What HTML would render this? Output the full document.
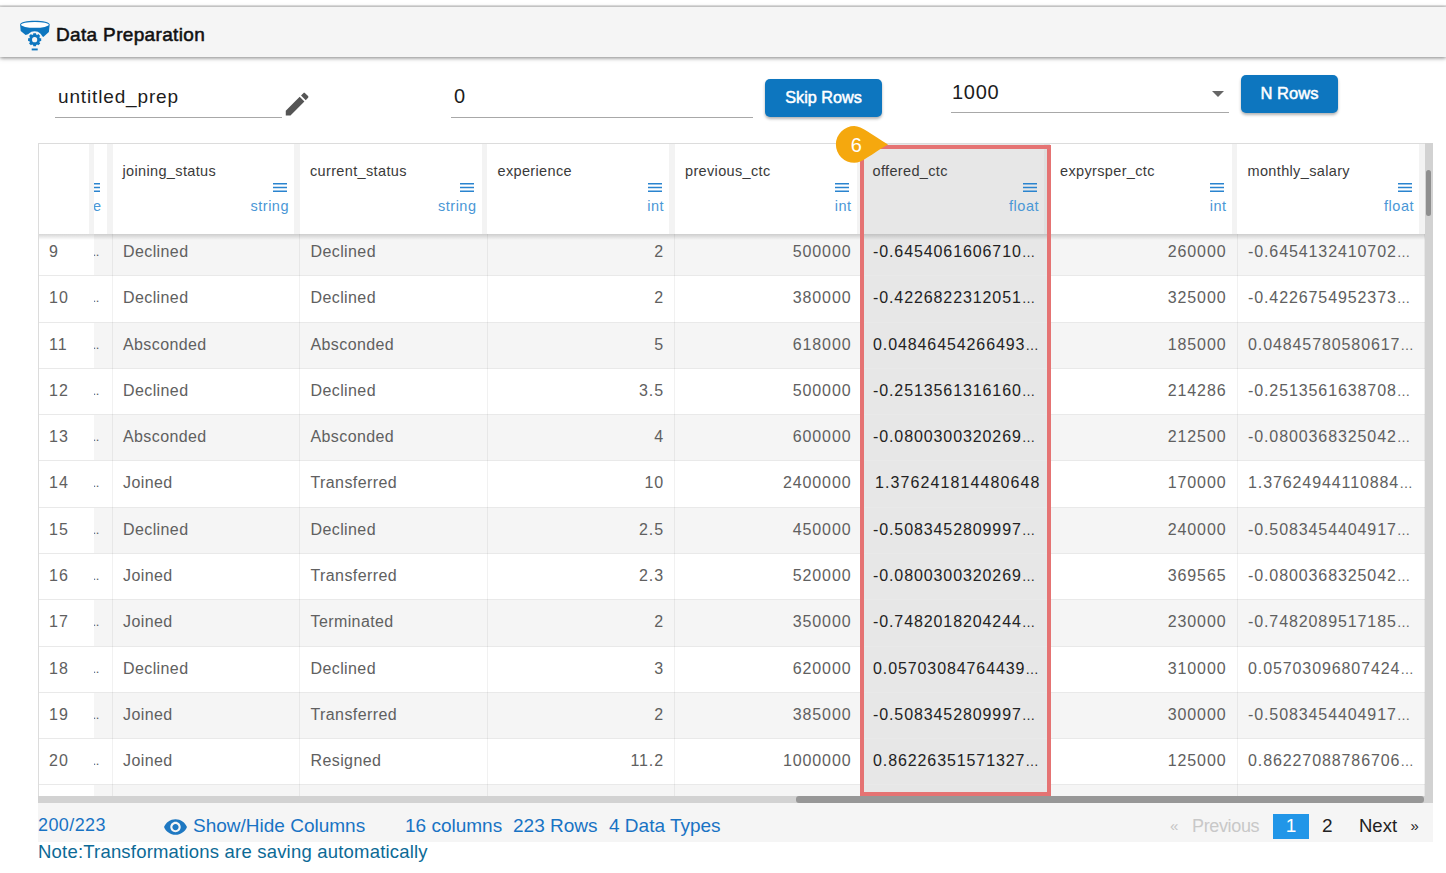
<!DOCTYPE html>
<html lang="en"><head><meta charset="utf-8"><title>Data Preparation</title>
<style>
*{box-sizing:border-box;margin:0;padding:0}
html,body{width:1446px;height:873px;overflow:hidden;background:#fff}
body{position:relative;font-family:"Liberation Sans",sans-serif;color:#333}
.abs{position:absolute;white-space:nowrap}
/* top bar */
.topline{position:absolute;left:0;top:5px;width:1446px;height:2px;background:linear-gradient(#e9e9e9,#d9d9d9)}
.titlebar{position:absolute;left:0;top:7px;width:1446px;height:50px;background:#f5f5f5;box-shadow:0 1px 4px rgba(0,0,0,.5)}
.title{position:absolute;left:56px;top:23px;font-size:19px;letter-spacing:.34px;font-weight:normal;-webkit-text-stroke:.55px #111;color:#111;line-height:24px;white-space:nowrap}
.logo{position:absolute;left:19px;top:20px;width:32px;height:32px}
/* toolbar */
.uline{position:absolute;height:1px;background:#a8a8a8}
.inp{position:absolute;white-space:nowrap;color:#1c1c1c;line-height:24px}
.btn{position:absolute;background:#0d76bf;color:#fff;border-radius:5px;text-align:center;font-weight:bold;white-space:nowrap;box-shadow:0 2px 3px rgba(0,0,0,.3)}
/* grid */
.grid{position:absolute;left:38px;top:143px;width:1395px;height:660px;overflow:hidden}
.gl{position:absolute;left:0;top:0;width:1px;height:653px;background:#dcdcdc;z-index:8}
.gt{position:absolute;left:0;top:0;width:1387px;height:1px;background:#dcdcdc;z-index:8}
.body{position:absolute;left:0;top:0;width:1387px;height:653px;overflow:hidden}
.row{position:absolute;left:0;width:1387px;height:46.27px;border-bottom:1px solid #e9e9e9;background:#fff}
.row.odd{background:#f5f5f5}
.c{position:absolute;top:0;height:46.27px;line-height:43.5px;font-size:16px;letter-spacing:.4px;color:#606060;white-space:nowrap;overflow:hidden}
.c.num{left:0;width:56px;height:45.3px;background:#fff;padding-left:11px;letter-spacing:1.1px;z-index:2}
.c.part{left:56px;width:18.5px;border-right:1px solid rgba(0,0,0,.055);padding-left:0;letter-spacing:-.3px;font-size:13px;text-indent:-1.5px}
.c.d{width:187.5px;border-right:1px solid rgba(0,0,0,.055);padding:0 10px 0 10.5px}
.c.r{text-align:right}
.c.hl{color:#222;height:45.270px;background:#e7e7e7;border-right-color:#dcdcdc}
.c.n{letter-spacing:.9px}
.h.hl{background:#e7e7e7}
.hstrip.hl{background:#dfdfdf}
.head{position:absolute;left:0;top:0;width:1387px;height:90.5px;background:#fff;z-index:3}
.h{position:absolute;top:0;width:182px;height:90.5px;background:#fff}
.hnum{position:absolute;left:0;top:0;width:51px;height:90.5px;background:#fff}
.hpart{position:absolute;left:56px;top:0;width:13px;height:90.5px;background:#fff;overflow:hidden}
.hstrip{position:absolute;top:0;width:5.8px;height:90.5px;background:#f3f3f3}
.nm{position:absolute;left:10px;top:18px;font-size:14.5px;line-height:20px;color:#3a3a3a;letter-spacing:.35px;white-space:nowrap}
.menu{position:absolute;right:8px;top:40px;width:14px;height:9px;stroke:#2a84cf;stroke-width:1.3;fill:none}
.ty{position:absolute;right:5.5px;top:52.5px;font-size:14.5px;line-height:20px;color:#4a97d6;letter-spacing:.5px;white-space:nowrap}
.hpart .menu{right:auto;left:-8px}
.hpart .ty{right:auto;left:-1px}
.hshadow{z-index:3;position:absolute;left:0;top:90.5px;width:1387px;height:6px;background:linear-gradient(rgba(0,0,0,.16),rgba(0,0,0,0))}
.hlbox{position:absolute;left:822px;top:2.300px;width:191px;height:650.700px;border:4px solid #e57373;z-index:5}
.vtrack{position:absolute;left:1387px;top:0;width:7.5px;height:653px;background:#d2d2d2;z-index:6}
.vthumb{position:absolute;left:1px;top:27px;width:5px;height:46px;background:#8f8f8f;border-radius:3px}
.htrack{position:absolute;left:0;top:653px;width:1395px;height:7px;background:#d2d2d2;z-index:6}
.hthumb{position:absolute;left:758px;top:0;width:628px;height:7px;background:#979797;border-radius:3px}
/* badge */
.badge{position:absolute;left:834px;top:124px;width:56px;height:41px;z-index:9}
/* footer */
.fbar{position:absolute;left:38px;top:803px;width:1395px;height:38.600px;background:#f5f5f5}
.ft{position:absolute;white-space:nowrap;font-size:18px;line-height:24px;color:#1873c4}
.pg{position:absolute;white-space:nowrap;font-size:19px;line-height:24px;color:#222}
.e{font-size:13.5px;letter-spacing:0}

</style></head><body>
<div class="topline"></div>
<div class="titlebar"></div>
<svg class="logo" viewBox="0 0 32 32">
  <path d="M1.100 4.500 C1.100 2 8 .7 15.900 .7 C23.800 .7 30.700 2 30.700 4.500 L29.900 12.100 L24.300 17 L16 12 L6.600 15 L1.700 10.900 Z" fill="#0d76bf"/>
  <ellipse cx="15.900" cy="4.850" rx="13.900" ry="2.900" fill="#fff"/>
  <circle cx="15.640" cy="19.700" r="8.400" fill="#f5f5f5"/>
  <path d="M14.13 14.51 L14.28 13.14 L17.00 13.14 L17.15 14.51 L18.24 14.97 L19.32 14.10 L21.24 16.02 L20.37 17.10 L20.83 18.19 L22.20 18.34 L22.20 21.06 L20.83 21.21 L20.37 22.30 L21.24 23.38 L19.32 25.30 L18.24 24.43 L17.15 24.89 L17.00 26.26 L14.28 26.26 L14.13 24.89 L13.04 24.43 L11.96 25.30 L10.04 23.38 L10.91 22.30 L10.45 21.21 L9.08 21.06 L9.08 18.34 L10.45 18.19 L10.91 17.10 L10.04 16.02 L11.96 14.10 L13.04 14.97Z M13.04 19.70 a2.6 2.6 0 1 0 5.2 0 a2.6 2.6 0 1 0 -5.2 0Z" fill="#0d76bf" fill-rule="evenodd"/>
  <rect x="12.700" y="28.500" width="6" height="1.900" fill="#0d76bf"/>
</svg>
<div class="title">Data Preparation</div>

<div class="inp" style="left:58px;top:84.500px;font-size:19px;letter-spacing:.85px">untitled_prep</div>
<div class="uline" style="left:55px;top:117px;width:227px"></div>
<svg class="abs" style="left:281.800px;top:88.700px;width:30.200px;height:30.200px" viewBox="0 0 24 24"><path fill="#555" d="M3 17.25V21h3.750L17.810 9.940l-3.750-3.750L3 17.250zM20.710 7.040c.39-.39.39-1.020 0-1.410l-2.340-2.340c-.39-.39-1.020-.39-1.410 0l-1.830 1.830 3.750 3.750 1.830-1.830z"/></svg>
<div class="inp" style="left:454px;top:84px;font-size:20px">0</div>
<div class="uline" style="left:451px;top:117px;width:302px"></div>
<div class="btn" style="left:765px;top:79px;width:117px;height:37.5px;line-height:37px;font-size:16.200px;font-weight:normal;-webkit-text-stroke:.5px #fff;letter-spacing:0">Skip Rows</div>
<div class="inp" style="left:952px;top:80px;font-size:20px;letter-spacing:.7px">1000</div>
<svg class="abs" style="left:1212px;top:91px;width:12px;height:6px" viewBox="0 0 12 6"><path d="M0 0h12L6 6z" fill="#666"/></svg>
<div class="uline" style="left:951px;top:112px;width:278px"></div>
<div class="btn" style="left:1241px;top:75px;width:97px;height:38px;line-height:37px;font-size:16.500px;font-weight:normal;-webkit-text-stroke:.5px #fff;letter-spacing:.05px">N Rows</div>

<div class="grid"><div class="gl"></div><div class="gt"></div>
<div class="body">
<div class="row odd" style="top:87.10px">
<div class="c num">9</div>
<div class="c part">..</div>
<div class="c d" style="left:74.5px">Declined</div>
<div class="c d" style="left:262.0px">Declined</div>
<div class="c d r n" style="left:449.5px">2</div>
<div class="c d r n" style="left:637.0px">500000</div>
<div class="c d n hl" style="left:824.5px">-0.6454061606710<span class="e">…</span></div>
<div class="c d r n" style="left:1012.0px">260000</div>
<div class="c d n" style="left:1199.5px">-0.6454132410702<span class="e">…</span></div>
</div>
<div class="row" style="top:133.37px">
<div class="c num">10</div>
<div class="c part">..</div>
<div class="c d" style="left:74.5px">Declined</div>
<div class="c d" style="left:262.0px">Declined</div>
<div class="c d r n" style="left:449.5px">2</div>
<div class="c d r n" style="left:637.0px">380000</div>
<div class="c d n hl" style="left:824.5px">-0.4226822312051<span class="e">…</span></div>
<div class="c d r n" style="left:1012.0px">325000</div>
<div class="c d n" style="left:1199.5px">-0.4226754952373<span class="e">…</span></div>
</div>
<div class="row odd" style="top:179.64px">
<div class="c num">11</div>
<div class="c part">..</div>
<div class="c d" style="left:74.5px">Absconded</div>
<div class="c d" style="left:262.0px">Absconded</div>
<div class="c d r n" style="left:449.5px">5</div>
<div class="c d r n" style="left:637.0px">618000</div>
<div class="c d n hl" style="left:824.5px">0.04846454266493<span class="e">…</span></div>
<div class="c d r n" style="left:1012.0px">185000</div>
<div class="c d n" style="left:1199.5px">0.04845780580617<span class="e">…</span></div>
</div>
<div class="row" style="top:225.91px">
<div class="c num">12</div>
<div class="c part">..</div>
<div class="c d" style="left:74.5px">Declined</div>
<div class="c d" style="left:262.0px">Declined</div>
<div class="c d r n" style="left:449.5px">3.5</div>
<div class="c d r n" style="left:637.0px">500000</div>
<div class="c d n hl" style="left:824.5px">-0.2513561316160<span class="e">…</span></div>
<div class="c d r n" style="left:1012.0px">214286</div>
<div class="c d n" style="left:1199.5px">-0.2513561638708<span class="e">…</span></div>
</div>
<div class="row odd" style="top:272.18px">
<div class="c num">13</div>
<div class="c part">..</div>
<div class="c d" style="left:74.5px">Absconded</div>
<div class="c d" style="left:262.0px">Absconded</div>
<div class="c d r n" style="left:449.5px">4</div>
<div class="c d r n" style="left:637.0px">600000</div>
<div class="c d n hl" style="left:824.5px">-0.0800300320269<span class="e">…</span></div>
<div class="c d r n" style="left:1012.0px">212500</div>
<div class="c d n" style="left:1199.5px">-0.0800368325042<span class="e">…</span></div>
</div>
<div class="row" style="top:318.45px">
<div class="c num">14</div>
<div class="c part">..</div>
<div class="c d" style="left:74.5px">Joined</div>
<div class="c d" style="left:262.0px">Transferred</div>
<div class="c d r n" style="left:449.5px">10</div>
<div class="c d r n" style="left:637.0px">2400000</div>
<div class="c d n hl" style="left:824.5px;letter-spacing:1.1px;padding-left:12.500px">1.376241814480648</div>
<div class="c d r n" style="left:1012.0px">170000</div>
<div class="c d n" style="left:1199.5px">1.37624944110884<span class="e">…</span></div>
</div>
<div class="row odd" style="top:364.72px">
<div class="c num">15</div>
<div class="c part">..</div>
<div class="c d" style="left:74.5px">Declined</div>
<div class="c d" style="left:262.0px">Declined</div>
<div class="c d r n" style="left:449.5px">2.5</div>
<div class="c d r n" style="left:637.0px">450000</div>
<div class="c d n hl" style="left:824.5px">-0.5083452809997<span class="e">…</span></div>
<div class="c d r n" style="left:1012.0px">240000</div>
<div class="c d n" style="left:1199.5px">-0.5083454404917<span class="e">…</span></div>
</div>
<div class="row" style="top:410.99px">
<div class="c num">16</div>
<div class="c part">..</div>
<div class="c d" style="left:74.5px">Joined</div>
<div class="c d" style="left:262.0px">Transferred</div>
<div class="c d r n" style="left:449.5px">2.3</div>
<div class="c d r n" style="left:637.0px">520000</div>
<div class="c d n hl" style="left:824.5px">-0.0800300320269<span class="e">…</span></div>
<div class="c d r n" style="left:1012.0px">369565</div>
<div class="c d n" style="left:1199.5px">-0.0800368325042<span class="e">…</span></div>
</div>
<div class="row odd" style="top:457.26px">
<div class="c num">17</div>
<div class="c part">..</div>
<div class="c d" style="left:74.5px">Joined</div>
<div class="c d" style="left:262.0px">Terminated</div>
<div class="c d r n" style="left:449.5px">2</div>
<div class="c d r n" style="left:637.0px">350000</div>
<div class="c d n hl" style="left:824.5px">-0.7482018204244<span class="e">…</span></div>
<div class="c d r n" style="left:1012.0px">230000</div>
<div class="c d n" style="left:1199.5px">-0.7482089517185<span class="e">…</span></div>
</div>
<div class="row" style="top:503.53px">
<div class="c num">18</div>
<div class="c part">..</div>
<div class="c d" style="left:74.5px">Declined</div>
<div class="c d" style="left:262.0px">Declined</div>
<div class="c d r n" style="left:449.5px">3</div>
<div class="c d r n" style="left:637.0px">620000</div>
<div class="c d n hl" style="left:824.5px">0.05703084764439<span class="e">…</span></div>
<div class="c d r n" style="left:1012.0px">310000</div>
<div class="c d n" style="left:1199.5px">0.05703096807424<span class="e">…</span></div>
</div>
<div class="row odd" style="top:549.80px">
<div class="c num">19</div>
<div class="c part">..</div>
<div class="c d" style="left:74.5px">Joined</div>
<div class="c d" style="left:262.0px">Transferred</div>
<div class="c d r n" style="left:449.5px">2</div>
<div class="c d r n" style="left:637.0px">385000</div>
<div class="c d n hl" style="left:824.5px">-0.5083452809997<span class="e">…</span></div>
<div class="c d r n" style="left:1012.0px">300000</div>
<div class="c d n" style="left:1199.5px">-0.5083454404917<span class="e">…</span></div>
</div>
<div class="row" style="top:596.07px">
<div class="c num">20</div>
<div class="c part">..</div>
<div class="c d" style="left:74.5px">Joined</div>
<div class="c d" style="left:262.0px">Resigned</div>
<div class="c d r n" style="left:449.5px">11.2</div>
<div class="c d r n" style="left:637.0px">1000000</div>
<div class="c d n hl" style="left:824.5px">0.86226351571327<span class="e">…</span></div>
<div class="c d r n" style="left:1012.0px">125000</div>
<div class="c d n" style="left:1199.5px">0.86227088786706<span class="e">…</span></div>
</div>
<div class="row odd" style="top:642.34px">
<div class="c num"></div>
<div class="c part"></div>
<div class="c d" style="left:74.5px"></div>
<div class="c d" style="left:262.0px"></div>
<div class="c d r n" style="left:449.5px"></div>
<div class="c d r n" style="left:637.0px"></div>
<div class="c d n hl" style="left:824.5px"></div>
<div class="c d r n" style="left:1012.0px"></div>
<div class="c d n" style="left:1199.5px"></div>
</div>
</div>
<div class="head">
<div class="hnum"></div><div class="hstrip" style="left:51px"></div>
<div class="hpart"><svg class="menu" viewBox="0 0 14 9"><path d="M0 .75h14M0 4.5h14M0 8.25h14"/></svg><span class="ty">e</span></div><div class="hstrip" style="left:69px"></div>
<div class="h" style="left:74.5px"><span class="nm">joining_status</span><svg class="menu" viewBox="0 0 14 9"><path d="M0 .75h14M0 4.5h14M0 8.25h14"/></svg><span class="ty">string</span></div><div class="hstrip" style="left:256.2px"></div>
<div class="h" style="left:262.0px"><span class="nm">current_status</span><svg class="menu" viewBox="0 0 14 9"><path d="M0 .75h14M0 4.5h14M0 8.25h14"/></svg><span class="ty">string</span></div><div class="hstrip" style="left:443.7px"></div>
<div class="h" style="left:449.5px"><span class="nm">experience</span><svg class="menu" viewBox="0 0 14 9"><path d="M0 .75h14M0 4.5h14M0 8.25h14"/></svg><span class="ty">int</span></div><div class="hstrip" style="left:631.2px"></div>
<div class="h" style="left:637.0px"><span class="nm">previous_ctc</span><svg class="menu" viewBox="0 0 14 9"><path d="M0 .75h14M0 4.5h14M0 8.25h14"/></svg><span class="ty">int</span></div><div class="hstrip" style="left:818.7px"></div>
<div class="h hl" style="left:824.5px"><span class="nm">offered_ctc</span><svg class="menu" viewBox="0 0 14 9"><path d="M0 .75h14M0 4.5h14M0 8.25h14"/></svg><span class="ty">float</span></div><div class="hstrip hl" style="left:1006.2px"></div>
<div class="h" style="left:1012.0px"><span class="nm">expyrsper_ctc</span><svg class="menu" viewBox="0 0 14 9"><path d="M0 .75h14M0 4.5h14M0 8.25h14"/></svg><span class="ty">int</span></div><div class="hstrip" style="left:1193.7px"></div>
<div class="h" style="left:1199.5px"><span class="nm">monthly_salary</span><svg class="menu" viewBox="0 0 14 9"><path d="M0 .75h14M0 4.5h14M0 8.25h14"/></svg><span class="ty">float</span></div><div class="hstrip" style="left:1381.2px"></div>
</div>
<div class="hshadow"></div>
<div class="hlbox"></div>
<div class="vtrack"><div class="vthumb"></div></div>
<div class="htrack"><div class="hthumb"></div></div>
</div>
<svg class="badge" viewBox="0 0 56 41">
  <path d="M20.3 2 A18.4 18.4 0 1 0 20.3 38.800 C28 38.800 37 30.200 54 20.400 C37 10.500 28 2 20.300 2 Z" fill="#f5a80e"/>
  <text x="22.300" y="27.500" text-anchor="middle" font-family="Liberation Sans, sans-serif" font-size="20" fill="#fff">6</text>
</svg>
<div class="fbar"></div>
<div class="ft" style="left:38px;top:813px;letter-spacing:.4px">200/223</div>
<svg class="abs" style="left:163px;top:816.500px;width:25px;height:20px" viewBox="0 0 24 18"><path fill="#1e78c2" d="M12 1.500C7 1.500 2.730 4.610 1 9c1.730 4.390 6 7.500 11 7.500s9.270-3.110 11-7.500c-1.730-4.390-6-7.500-11-7.500zM12 14c-2.760 0-5-2.240-5-5s2.240-5 5-5 5 2.240 5 5-2.240 5-5 5zm0-8c-1.660 0-3 1.340-3 3s1.340 3 3 3 3-1.340 3-3-1.340-3-3-3z"/></svg>
<div class="ft" style="left:193px;top:814px;font-size:19px">Show/Hide Columns</div>
<div class="ft" style="left:405px;top:814px;font-size:19px">16 columns</div>
<div class="ft" style="left:513px;top:814px;font-size:19px">223 Rows</div>
<div class="ft" style="left:609px;top:814px;font-size:19px">4 Data Types</div>
<div class="ft" style="left:38px;top:840px;font-size:18.5px;letter-spacing:.2px;color:#0c6a96">Note:Transformations are saving automatically</div>

<div class="pg" style="left:1170px;top:814px;color:#c4c4c4;font-size:15px">«</div>
<div class="pg" style="left:1192px;top:814px;color:#c8c8c8;font-size:18px;letter-spacing:-.35px">Previous</div>
<div class="abs" style="left:1273px;top:814px;width:36px;height:25px;background:#2196e8"></div>
<div class="pg" style="left:1273px;top:814px;width:36px;text-align:center;color:#fff">1</div>
<div class="pg" style="left:1322px;top:814px">2</div>
<div class="pg" style="left:1359px;top:814px;font-size:18.500px">Next</div>
<div class="pg" style="left:1410.500px;top:814px;font-size:15px">»</div>

</body></html>
